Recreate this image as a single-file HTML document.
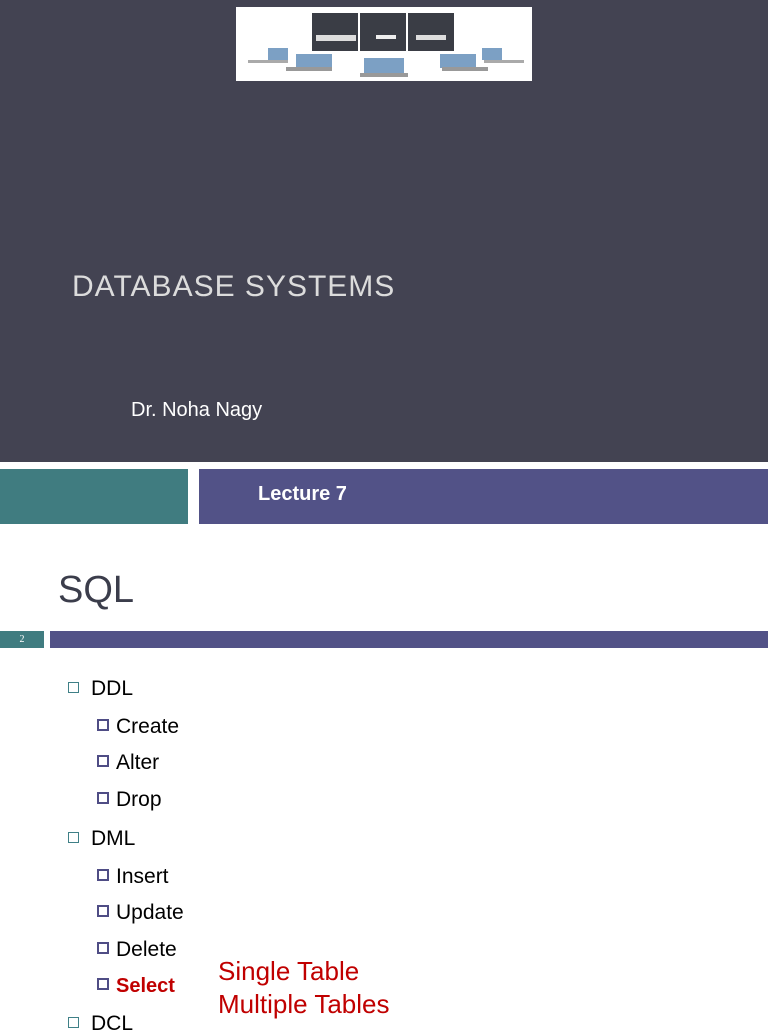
<!DOCTYPE html>
<html><head><style>
body{margin:0;width:768px;height:1024px;overflow:hidden;background:#fff;position:relative;font-family:"Liberation Sans",sans-serif}
.a{position:absolute}
.t{color:#000;font-size:21px}
.s{font-size:21px}
.sq{display:inline-block;width:8px;height:8px;border:2px solid #4f4d85;background:#fff;box-sizing:content-box;margin-right:7px;vertical-align:2px}
.sq1{display:inline-block;width:9px;height:9px;border:1px solid #3f8087;margin-right:12px;vertical-align:2px}
</style></head><body>
<div class="a" style="left:0;top:0;width:768px;height:462px;background:#434352"></div>
<div class="a" style="left:236px;top:7px;width:296px;height:74px;background:#fff">
<svg width="296" height="74">
<rect x="76" y="6" width="46" height="38" fill="#3a3d45"/><rect x="124" y="6" width="46" height="38" fill="#3a3d45"/><rect x="172" y="6" width="46" height="38" fill="#3a3d45"/>
<rect x="80" y="28" width="40" height="6" fill="#ddd"/><rect x="140" y="28" width="20" height="4" fill="#eee"/><rect x="180" y="28" width="30" height="5" fill="#ddd"/>
<rect x="128" y="51" width="40" height="16" fill="#7ca0c4"/><rect x="124" y="66" width="48" height="4" fill="#999"/>
<rect x="60" y="47" width="36" height="14" fill="#7ca0c4"/><rect x="50" y="60" width="46" height="4" fill="#999"/>
<rect x="204" y="47" width="36" height="14" fill="#7ca0c4"/><rect x="206" y="60" width="46" height="4" fill="#999"/>
<rect x="32" y="41" width="20" height="12" fill="#7ca0c4"/><rect x="12" y="53" width="40" height="3" fill="#aaa"/>
<rect x="246" y="41" width="20" height="12" fill="#7ca0c4"/><rect x="248" y="53" width="40" height="3" fill="#aaa"/>
</svg></div>
<div class="a" style="left:72px;top:270px;color:#dcdcdc;font-size:30px;letter-spacing:1px">DATABASE SYSTEMS</div>
<div class="a" style="left:131px;top:399px;color:#fff;font-size:20px">Dr. Noha Nagy</div>
<div class="a" style="left:0;top:469px;width:188px;height:55px;background:#407c80"></div>
<div class="a" style="left:199px;top:469px;width:569px;height:55px;background:#525287"></div>
<div class="a" style="left:258px;top:483px;color:#fff;font-size:20px;font-weight:bold">Lecture 7</div>
<div class="a" style="left:58px;top:569px;color:#3b3d4b;font-size:38px">SQL</div>
<div class="a" style="left:0;top:631px;width:44px;height:17px;background:#407c80;color:#fff;font-size:10px;font-family:'Liberation Serif',serif;text-align:center;line-height:17px">2</div>
<div class="a" style="left:50px;top:631px;width:718px;height:17px;background:#525287"></div>
<div class="a t" style="left:68px;top:677px"><span class="sq1"></span>DDL</div>
<div class="a t s" style="left:97px;top:715px"><span class="sq"></span>Create</div>
<div class="a t s" style="left:97px;top:751px"><span class="sq"></span>Alter</div>
<div class="a t s" style="left:97px;top:788px"><span class="sq"></span>Drop</div>
<div class="a t" style="left:68px;top:827px"><span class="sq1"></span>DML</div>
<div class="a t s" style="left:97px;top:865px"><span class="sq"></span>Insert</div>
<div class="a t s" style="left:97px;top:901px"><span class="sq"></span>Update</div>
<div class="a t s" style="left:97px;top:938px"><span class="sq"></span>Delete</div>
<div class="a t" style="left:97px;top:975px;font-size:20px;color:#c00000;font-weight:bold"><span class="sq"></span>Select</div>
<div class="a t" style="left:68px;top:1012px"><span class="sq1"></span>DCL</div>
<div class="a" style="left:218px;top:955px;color:#c00000;font-size:26px;line-height:33px">Single Table<br>Multiple Tables</div>
</body></html>
